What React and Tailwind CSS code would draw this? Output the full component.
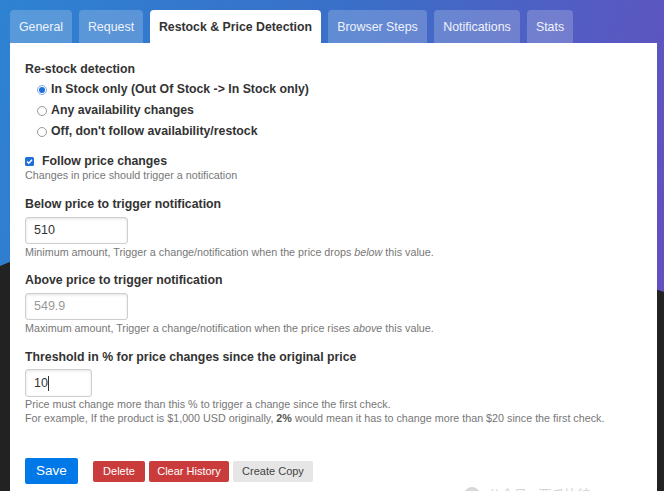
import React from 'react'

const font = { fontFamily: '"Liberation Sans", Arial, sans-serif' }

const tabs = [
    { name: 'General', w: 'w-[62px]' },
    { name: 'Request', w: 'w-[64px]' },
    { name: 'Restock & Price Detection', w: 'w-[171px]', active: true },
    { name: 'Browser Steps', w: 'w-[99px]' },
    { name: 'Notifications', w: 'w-[86px]' },
    { name: 'Stats', w: 'w-[46px]' },
]

const Radio = ({ checked, children }) => (
    <div className="h-[21px] flex items-center gap-[4px] pl-[12px]">
        {checked ? (
            <span className="w-[10px] h-[10px] rounded-full border border-[#7fb0ea] bg-white flex items-center justify-center">
                <span className="w-[6px] h-[6px] rounded-full bg-[#1f6fd8]" />
            </span>
        ) : (
            <span className="w-[10px] h-[10px] rounded-full border border-[#9a9a9a] bg-white" />
        )}
        <span className="text-[12.3px] font-bold text-[#333]">{children}</span>
    </div>
)

const Field = ({ value, placeholder, width, caret }) => (
    <div className={`${width} h-[27px] border border-[#cfcfcf] rounded-[3px] shadow-[inset_0_1px_3px_#e2e2e2] flex items-center px-[8px] text-[12.5px]`}>
        {value ? <span className="text-[#333]">{value}</span> : <span className="text-[#9a9a9a]">{placeholder}</span>}
        {caret && <span className="w-px h-[15px] bg-[#333]" />}
    </div>
)

const Help = ({ children }) => (
    <p className="text-[10.75px] leading-[12px] text-[#777]">{children}</p>
)

const Label = ({ children }) => (
    <p className="text-[12.3px] leading-[16px] font-bold text-[#333]">{children}</p>
)

export default function App() {
    return (
        <div style={font} className="relative w-full h-[491px] overflow-hidden bg-[linear-gradient(105deg,#2e82d2_0%,#3a6fc8_45%,#6a4bbd_100%)]">
            <svg className="absolute inset-0 w-full h-full" viewBox="0 0 664 491" preserveAspectRatio="none">
                <path d="M0 266 C 200 180, 450 220, 664 292 L664 491 L0 491 Z" fill="#222222" />
            </svg>

            <div className="relative pt-[10px] pl-[10px]">
                <div className="flex gap-[7px] h-[33px]">
                    {tabs.map(t =>
                        t.active ? (
                            <div key={t.name} className={`${t.w} pt-px flex items-center justify-center bg-white rounded-t-[4px] text-[12.3px] font-bold text-[#333]`}>{t.name}</div>
                        ) : (
                            <div key={t.name} className={`${t.w} pt-px flex items-center justify-center bg-white/20 rounded-t-[4px] text-[12.4px] text-[#eef2fa]`}>{t.name}</div>
                        )
                    )}
                </div>

                <div className="w-[647px] h-[460px] bg-white px-[15px] pt-[18px]">
                    <Label>Re-stock detection</Label>
                    <div className="mt-[2px]">
                        <Radio checked>In Stock only (Out Of Stock -&gt; In Stock only)</Radio>
                        <Radio>Any availability changes</Radio>
                        <Radio>Off, don't follow availability/restock</Radio>
                    </div>

                    <div className="mt-[11px] h-[16px] flex items-center gap-[8px]">
                        <svg width="9" height="9" viewBox="0 0 9 9">
                            <rect width="9" height="9" rx="1.5" fill="#1f6fd8" />
                            <path d="M2 4.6 L3.8 6.3 L7 2.8" stroke="#fff" strokeWidth="1.4" fill="none" />
                        </svg>
                        <span className="text-[12.3px] font-bold text-[#333]">Follow price changes</span>
                    </div>
                    <Help>Changes in price should trigger a notification</Help>

                    <div className="mt-[15px]"><Label>Below price to trigger notification</Label></div>
                    <div className="mt-[5px]"><Field value="510" width="w-[103px]" /></div>
                    <div className="mt-[2px] h-[12px]">
                        <Help>Minimum amount, Trigger a change/notification when the price drops <i>below</i> this value.</Help>
                    </div>

                    <div className="mt-[14px]"><Label>Above price to trigger notification</Label></div>
                    <div className="mt-[5px]"><Field placeholder="549.9" width="w-[103px]" /></div>
                    <div className="mt-[2px] h-[12px]">
                        <Help>Maximum amount, Trigger a change/notification when the price rises <i>above</i> this value.</Help>
                    </div>

                    <div className="mt-[15px]"><Label>Threshold in % for price changes since the original price</Label></div>
                    <div className="mt-[4px]"><Field value="10" width="w-[67px] h-[28px]" caret /></div>
                    <div className="text-[10.75px] leading-[14px] text-[#777]">
                        <p>Price must change more than this % to trigger a change since the first check.</p>
                        <p>For example, If the product is $1,000 USD originally, <b className="text-[#555]">2%</b> would mean it has to change more than $20 since the first check.</p>
                    </div>

                    <div className="mt-[33px] flex items-center">
                        <button className="w-[53px] h-[26px] bg-[#0078e7] text-white text-[13.5px] rounded-[2px]">Save</button>
                        <button className="ml-[15px] w-[52px] h-[21px] bg-[#ca3c3c] text-white text-[11px] rounded-[2px]">Delete</button>
                        <button className="ml-[4px] w-[80px] h-[21px] bg-[#ca3c3c] text-white text-[11px] rounded-[2px]">Clear History</button>
                        <button className="ml-[4px] w-[80px] h-[21px] bg-[#e6e6e6] text-[#444] text-[11px] rounded-[2px]">Create Copy</button>
                    </div>
                </div>
            </div>

            <div className="absolute left-[464px] top-[485px] flex items-center gap-[8px] text-[13px] text-[#d4d4d4]" style={{ fontFamily: '"Liberation Sans", "Noto Sans CJK SC", sans-serif' }}>
                <span className="w-[16px] h-[16px] rounded-full bg-[#d8d8d8]" />
                <span>公众号 · 西瓜比特</span>
            </div>
        </div>
    )
}
